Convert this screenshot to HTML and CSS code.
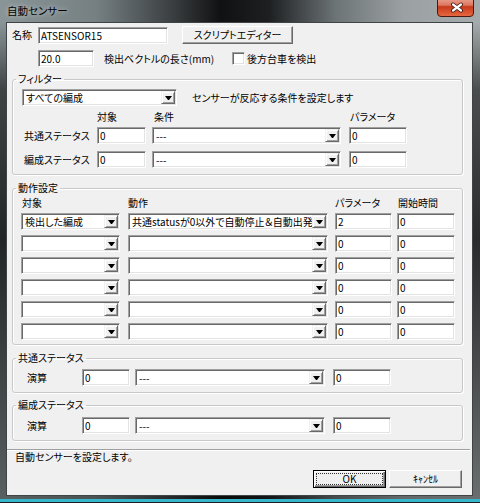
FILE: index.html
```html
<!DOCTYPE html>
<html lang="ja">
<head>
  <meta charset="UTF-8">
  <title>自動センサー</title>
  <link rel="stylesheet" href="styles.css">
</head>
<body>
<div class="window">
  <div class="titlebar">
    <span class="title">自動センサー</span>
    <span class="close-btn">
      <svg width="37" height="17" viewBox="0 0 37 17">
        <defs>
          <linearGradient id="closeGrad" x1="0" y1="0" x2="0" y2="1">
            <stop offset="0" stop-color="#edb3a4"/>
            <stop offset="0.45" stop-color="#dc7760"/>
            <stop offset="0.52" stop-color="#c63a1d"/>
            <stop offset="1" stop-color="#e86a42"/>
          </linearGradient>
        </defs>
        <rect x="0.5" y="-4" width="36" height="20.5" rx="3.5" fill="url(#closeGrad)" stroke="#4b1a0e"/>
        <path d="M16 4.5 L24 10.5 M24 4.5 L16 10.5" stroke="#3c1309" stroke-width="4" stroke-linecap="round"/>
        <path d="M16 4.5 L24 10.5 M24 4.5 L16 10.5" stroke="#fff" stroke-width="2.2" stroke-linecap="round"/>
      </svg>
    </span>
  </div>

  <div class="client">
    <div class="row row-name">
      <span class="lbl-name">名称</span>
      <input class="field in-name" value="ATSENSOR15">
      <button class="btn btn-script">スクリプトエディター</button>
    </div>
    <div class="row row-len">
      <input class="field in-len" value="20.0">
      <span class="lbl-len">検出ベクトルの長さ(mm)</span>
      <span class="check"></span>
      <span class="lbl-check">後方台車を検出</span>
    </div>

    <!-- フィルター -->
    <fieldset class="group group-filter">
      <legend>フィルター</legend>
      <div class="row">
        <div class="field combo cb-all"><span class="combo-text">すべての編成</span><span class="combo-btn"></span></div>
        <span class="hint">センサーが反応する条件を設定します</span>
      </div>
      <div class="filter-grid head">
        <span></span><span>対象</span><span class="pl2">条件</span><span class="pl1">パラメータ</span>
      </div>
      <div class="filter-grid rows">
        <span class="row-lbl">共通ステータス</span>
        <input class="field w49" value="0">
        <div class="field combo w189"><span class="combo-text">---</span><span class="combo-btn"></span></div>
        <input class="field w58" value="0">

        <span class="row-lbl">編成ステータス</span>
        <input class="field w49" value="0">
        <div class="field combo w189"><span class="combo-text">---</span><span class="combo-btn"></span></div>
        <input class="field w58" value="0">
      </div>
    </fieldset>

    <!-- 動作設定 -->
    <fieldset class="group group-action">
      <legend>動作設定</legend>
      <div class="action-grid head">
        <span class="pl1">対象</span><span>動作</span><span>パラメータ</span><span class="pl1">開始時間</span>
      </div>
      <div class="action-grid rows">
        <div class="field combo w99"><span class="combo-text">検出した編成</span><span class="combo-btn"></span></div>
        <div class="field combo w200"><span class="combo-text">共通statusが0以外で自動停止＆自動出発</span><span class="combo-btn"></span></div>
        <input class="field w57" value="2">
        <input class="field w58" value="0">

        <div class="field combo w99"><span class="combo-text"></span><span class="combo-btn"></span></div>
        <div class="field combo w200"><span class="combo-text"></span><span class="combo-btn"></span></div>
        <input class="field w57" value="0">
        <input class="field w58" value="0">

        <div class="field combo w99"><span class="combo-text"></span><span class="combo-btn"></span></div>
        <div class="field combo w200"><span class="combo-text"></span><span class="combo-btn"></span></div>
        <input class="field w57" value="0">
        <input class="field w58" value="0">

        <div class="field combo w99"><span class="combo-text"></span><span class="combo-btn"></span></div>
        <div class="field combo w200"><span class="combo-text"></span><span class="combo-btn"></span></div>
        <input class="field w57" value="0">
        <input class="field w58" value="0">

        <div class="field combo w99"><span class="combo-text"></span><span class="combo-btn"></span></div>
        <div class="field combo w200"><span class="combo-text"></span><span class="combo-btn"></span></div>
        <input class="field w57" value="0">
        <input class="field w58" value="0">

        <div class="field combo w99"><span class="combo-text"></span><span class="combo-btn"></span></div>
        <div class="field combo w200"><span class="combo-text"></span><span class="combo-btn"></span></div>
        <input class="field w57" value="0">
        <input class="field w58" value="0">
      </div>
    </fieldset>

    <!-- 共通ステータス -->
    <fieldset class="group group-calc">
      <legend>共通ステータス</legend>
      <div class="calc-grid">
        <span class="row-lbl">演算</span>
        <input class="field w48" value="0">
        <div class="field combo w190"><span class="combo-text">---</span><span class="combo-btn"></span></div>
        <input class="field w58" value="0">
      </div>
    </fieldset>

    <!-- 編成ステータス -->
    <fieldset class="group group-calc group-calc2">
      <legend>編成ステータス</legend>
      <div class="calc-grid">
        <span class="row-lbl">演算</span>
        <input class="field w48" value="0">
        <div class="field combo w190"><span class="combo-text">---</span><span class="combo-btn"></span></div>
        <input class="field w58" value="0">
      </div>
    </fieldset>

    <div class="separator"></div>
    <div class="status">自動センサーを設定します。</div>
    <div class="buttons">
      <button class="btn btn-dlg btn-default"><span class="focus">OK</span></button>
      <button class="btn btn-dlg">ｷｬﾝｾﾙ</button>
    </div>
  </div>
</div>
</body>
</html>
```

FILE: styles.css
```css
body {
  margin: 0;
  font-family: "Liberation Sans Narrow", "Noto Sans CJK JP", sans-serif;
  font-size: 10px;
  line-height: 12px;
  font-feature-settings: "palt";
  color: #000;
}

/* ウィンドウ枠 */
.window {
  box-sizing: border-box;
  width: 480px;
  height: 503px;
  padding: 0 7px 7px 6px;
  background:
    linear-gradient(0deg, #1b1e20 0, #1b1e20 1px, #36b6cb 1px, #36b6cb 4px, transparent 4px),
    linear-gradient(180deg, transparent 0, transparent 22px, rgba(0,0,0,.55) 90px, rgba(0,0,0,.75) 240px, rgba(0,0,0,.35) 100%),
    linear-gradient(90deg, #8a9598 0%, #768083 20%, #3a3e40 36%, #101112 46%, #1d1f21 56%, #6d7476 70%, #9ba1a3 84%, #a6abad 100%);
}

.titlebar {
  display: flex;
  justify-content: space-between;
  align-items: flex-start;
  height: 22px;
}
.title {
  padding-left: 1px;
  font-family: "Noto Sans CJK JP", sans-serif;
  font-size: 10.5px;
  line-height: 22px;
  text-shadow: 0 0 5px rgba(255,255,255,.7);
}
.close-btn {
  display: block;
  height: 17px;
  margin-right: -1px;
}
.close-btn svg { display: block; }

.client {
  box-sizing: border-box;
  height: 474px;
  border: 1px solid #3f4446;
  background: #f0f0f0;
  overflow: hidden;
}

.row {
  display: flex;
  align-items: center;
}

/* 入力欄・コンボ */
.field {
  box-sizing: border-box;
  height: 17px;
  margin: 0;
  padding: 0 2px;
  background: #fff;
  border: 1px solid;
  border-color: #a0a0a0 #fff #fff #a0a0a0;
  box-shadow: inset 1px 1px 0 #696969, inset -1px -1px 0 #e3e3e3;
  font: inherit;
  font-feature-settings: "palt";
  color: #000;
  outline: none;
}
.combo {
  display: flex;
  padding: 1px;
}
.combo-text {
  flex: 1;
  min-width: 0;
  padding-left: 2px;
  overflow-x: clip;
  overflow-y: visible;
  white-space: nowrap;
  line-height: 13px;
}
.combo-btn {
  box-sizing: border-box;
  width: 14px;
  height: 13px;
  flex: none;
  display: flex;
  align-items: center;
  justify-content: center;
  background: #f0f0f0;
  border: 1px solid;
  border-color: #f0f0f0 #696969 #696969 #f0f0f0;
  box-shadow: inset 1px 1px 0 #fff, inset -1px -1px 0 #a0a0a0;
}
.combo-btn::after {
  content: "";
  width: 1px;
  border-top: 4px solid #000;
  border-left: 3px solid transparent;
  border-right: 3px solid transparent;
  margin-top: 1px;
}

.btn {
  box-sizing: border-box;
  height: 18px;
  margin: 0;
  padding: 0;
  background: #f0f0f0;
  border: 1px solid;
  border-color: #fff #696969 #696969 #fff;
  box-shadow: inset -1px -1px 0 #a0a0a0;
  font: inherit;
  font-feature-settings: "palt";
  color: #000;
}

.check {
  box-sizing: border-box;
  width: 13px;
  height: 13px;
  background: #fff;
  border: 1px solid;
  border-color: #a0a0a0 #fff #fff #a0a0a0;
  box-shadow: inset 1px 1px 0 #696969, inset -1px -1px 0 #e3e3e3;
}

/* 上段 */
.row-name {
  height: 18px;
  margin: 3px 0 0 5px;
}
.lbl-name { width: 26px; }
.in-name { width: 130px; }
.btn-script { width: 111px; margin-left: 14px; }

.row-len {
  height: 17px;
  margin: 6px 0 0 31px;
}
.in-len { width: 56px; }
.lbl-len { width: 128px; margin-left: 10px; }
.lbl-check { margin-left: 2px; }

/* グループ */
.group {
  margin: 0 9px 0 5px;
  padding: 0;
  min-width: 0;
  border: 1px solid #c9c9c9;
  border-radius: 3px;
  box-shadow: 1px 1px 0 #fff, inset 1px 1px 0 #fff;
}
.group legend {
  margin-left: 3px;
  padding: 0 2px;
  line-height: 12px;
}
.head { height: 12px; }
.pl1 { padding-left: 1px; }
.pl2 { padding-left: 2px; }
.row-lbl { line-height: 17px; white-space: nowrap; }

.group-filter { margin-top: 6px; padding: 4px 0 6px; }
.cb-all { width: 155px; margin-left: 9px; }
.hint { margin-left: 15px; }
.filter-grid {
  display: grid;
  grid-template-columns: 84px 55px 197px 58px;
}
.filter-grid.head { margin-top: 5px; }
.filter-grid.rows { margin-top: 4px; row-gap: 7px; }
.filter-grid .row-lbl { padding-left: 11px; }

.group-action { margin-top: 7px; padding: 3px 0 4px; }
.action-grid {
  display: grid;
  grid-template-columns: 107px 207px 62px 58px;
  padding-left: 8px;
}
.action-grid.rows { margin-top: 4px; row-gap: 5px; }

.group-calc { margin-top: 7px; padding: 5px 0 6px; }
.group-calc2 { margin-top: 6px; padding-top: 6px; }
.calc-grid {
  display: grid;
  grid-template-columns: 55px 53px 198px 58px;
  padding-left: 14px;
}

.w48 { width: 48px; }
.w49 { width: 49px; }
.w57 { width: 57px; }
.w58 { width: 58px; }
.w99 { width: 99px; }
.w189 { width: 189px; }
.w190 { width: 190px; }
.w200 { width: 200px; }

/* 下段 */
.separator {
  height: 0;
  margin: 8px 2px 0 0;
  border-top: 1px solid #a0a0a0;
  border-bottom: 1px solid #fff;
}
.status {
  margin: 0 0 0 8px;
}
.buttons {
  display: flex;
  justify-content: flex-end;
  gap: 3px;
  margin: 7px 10px 0 0;
}
.btn-dlg { width: 73px; }
.btn-default {
  padding: 2px;
  border-color: #000;
  box-shadow: inset 1px 1px 0 #fff, inset -1px -1px 0 #696969, inset -2px -2px 0 #a0a0a0;
}
.btn-default .focus {
  display: block;
  box-sizing: border-box;
  height: 100%;
  border: 1px dotted #333;
  line-height: 10px;
}
```
